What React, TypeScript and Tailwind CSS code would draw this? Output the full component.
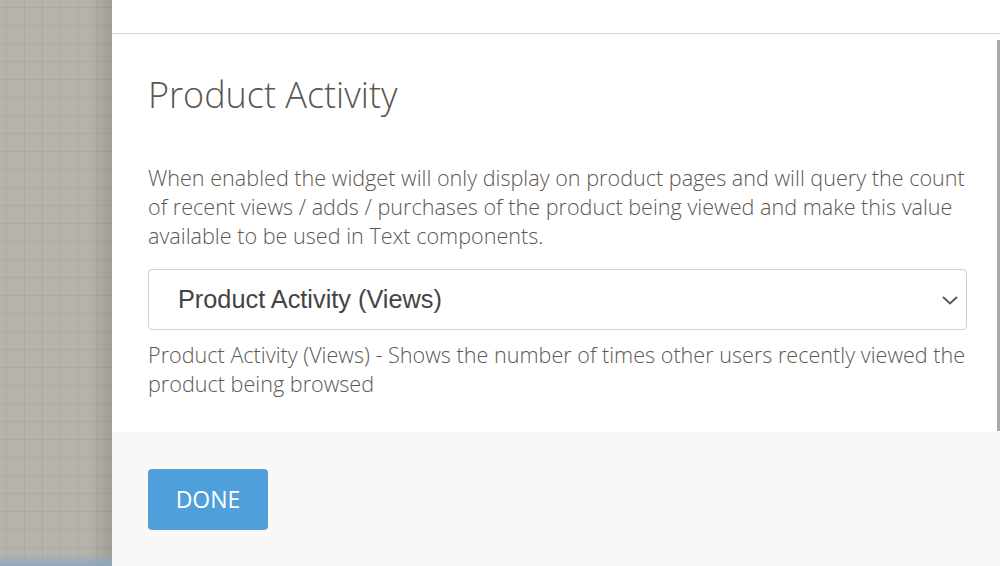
import React from "react";

export default function App() {
  return (
    <div className="relative flex h-[566px] w-[1000px] overflow-hidden bg-white font-['Open_Sans',sans-serif]">
      <div className="relative h-full w-[112px] shrink-0 bg-[#b6b3ac] bg-[linear-gradient(to_right,rgba(120,115,100,0.13)_1px,transparent_1px),linear-gradient(to_bottom,rgba(120,115,100,0.13)_1px,transparent_1px)] bg-[size:18px_18px] bg-[position:6px_7px]">
        <div className="absolute inset-y-0 right-0 w-[24px] bg-[linear-gradient(to_right,rgba(0,0,0,0),rgba(0,0,0,0.12))]" />
        <div className="absolute inset-x-0 bottom-0 h-[12px] bg-[linear-gradient(to_bottom,rgba(140,160,185,0),rgba(140,165,195,0.9))]" />
      </div>
      <div className="flex h-full flex-1 flex-col">
        <div className="h-[34px] shrink-0 border-b border-[#d9d6cf] bg-white" />
        <div className="relative flex-1 bg-white pl-[36px] pr-[33px] pt-[36px]">
          <div className="absolute right-0 top-[6px] h-[391px] w-[3px] bg-[#a9a9a9]" />
          <h1 className="text-[36px] font-light leading-[49px] text-[#5b5650]">Product Activity</h1>
          <p className="mt-[44px] text-[21.6px] font-light leading-[29px] text-[#5d5853]">
            When enabled the widget will only display on product pages and will query the count of recent views / adds / purchases of the product being viewed and make this value available to be used in Text components.
          </p>
          <div className="mt-[19px] flex h-[61px] items-center justify-between rounded-[4px] border border-[#cfcfcf] bg-white pl-[29px] pr-[7px]">
            <span className="font-['Liberation_Sans',Arial,sans-serif] text-[25.3px] text-[#444]">Product Activity (Views)</span>
            <svg width="18" height="12" viewBox="0 0 18 12">
              <path d="M2 3 L9 9.5 L16 3" fill="none" stroke="#555" strokeWidth="1.8" />
            </svg>
          </div>
          <p className="mt-[10px] text-[21.6px] font-light leading-[29px] text-[#5d5853]">
            Product Activity (Views) - Shows the number of times other users recently viewed the product being browsed
          </p>
        </div>
        <div className="h-[134px] shrink-0 bg-[#f9f8f6] pl-[36px] pt-[37px]">
          <button className="flex h-[61px] w-[120px] items-center justify-center rounded-[4px] bg-[#4f9fdb] text-[23px] text-white">
            DONE
          </button>
        </div>
      </div>
    </div>
  );
}
